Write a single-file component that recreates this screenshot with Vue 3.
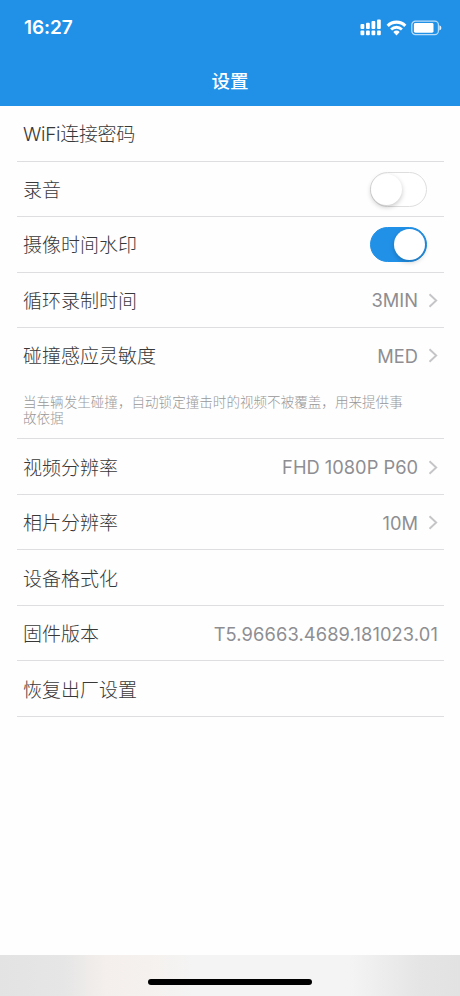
<script setup>
import { ref } from 'vue'

const rows = ref([
  { label: 'WiFi连接密码', kind: 'latin' },
  { label: '录音', toggle: true, on: false },
  { label: '摄像时间水印', toggle: true, on: true },
  { label: '循环录制时间', value: '3MIN', arrow: true },
  {
    label: '碰撞感应灵敏度',
    value: 'MED',
    arrow: true,
    note: '当车辆发生碰撞，自动锁定撞击时的视频不被覆盖，用来提供事故依据',
  },
  { label: '视频分辨率', value: 'FHD 1080P P60', arrow: true },
  { label: '相片分辨率', value: '10M', arrow: true },
  { label: '设备格式化' },
  { label: '固件版本', value: 'T5.96663.4689.181023.01', kind: 'version' },
  { label: '恢复出厂设置' },
])
</script>

<template>
  <div class="screen">
    <header class="header">
      <div class="status">
        <span class="time">16:27</span>
        <div class="indicators">
          <svg class="signal" width="21" height="17" viewBox="0 0 21 17" fill="#fff">
            <rect x="0.5" y="5" width="3.8" height="5" rx="1" />
            <rect x="6" y="3.7" width="3.8" height="6.3" rx="1" />
            <rect x="11.5" y="2" width="3.8" height="8" rx="1" />
            <rect x="17" y="0.5" width="3.8" height="9.5" rx="1" />
            <rect x="0.5" y="11.5" width="3.8" height="4.8" rx="1" />
            <rect x="6" y="11.5" width="3.8" height="4.8" rx="1" />
            <rect x="11.5" y="11.5" width="3.8" height="4.8" rx="1" />
            <rect x="17" y="11.5" width="3.8" height="4.8" rx="1" />
          </svg>
          <svg class="wifi" width="21" height="16" viewBox="0 0 21 16">
            <path d="M1.7 5.8a12.6 12.6 0 0 1 17.6 0" fill="none" stroke="#fff" stroke-width="3.2" />
            <path d="M5.1 9.4a7.8 7.8 0 0 1 10.8 0" fill="none" stroke="#fff" stroke-width="2.8" />
            <path d="M7.3 12.1a4.7 4.7 0 0 1 6.4 0L10.5 15.4z" fill="#fff" />
          </svg>
          <svg class="battery" width="31" height="16" viewBox="0 0 31 16">
            <rect x="0.8" y="1.2" width="26.6" height="13.4" rx="3.6" fill="none" stroke="#b9dcf8" stroke-width="1.2" />
            <rect x="2.9" y="3.1" width="19.6" height="9.6" rx="1.4" fill="#fff" />
            <path d="M28.4 5.3q2 .8 2 2.6t-2 2.6z" fill="#e6f3fd" />
          </svg>
        </div>
      </div>
      <h1 class="title">设置</h1>
    </header>

    <main class="list">
      <section v-for="row in rows" :key="row.label" class="item">
        <div class="row">
          <span class="label" :class="row.kind">{{ row.label }}</span>
          <button
            v-if="row.toggle"
            class="switch"
            :class="{ on: row.on }"
            :aria-pressed="row.on"
            @click="row.on = !row.on"
          >
            <span class="knob"></span>
          </button>
          <span v-if="row.value" class="value" :class="row.kind">{{ row.value }}</span>
          <svg v-if="row.arrow" class="arrow" width="10" height="15" viewBox="0 0 10 15">
            <path d="M1.5 1.3 8.2 7.5 1.5 13.7" fill="none" stroke="#c5c5c8" stroke-width="1.9" />
          </svg>
        </div>
        <p v-if="row.note" class="note">{{ row.note }}</p>
      </section>
    </main>

    <footer class="footer"><span class="home"></span></footer>
  </div>
</template>

<style>
body {
  margin: 0;
  background: #fefefe;
}
</style>

<style scoped>
.screen {
  display: flex;
  flex-direction: column;
  width: 460px;
  height: 996px;
  overflow: hidden;
  background: #fefefe;
  font-family: Inter, "Noto Sans CJK SC", sans-serif;
}
.header {
  flex: none;
  height: 106px;
  background: #2191e8;
  color: #fff;
}
.status {
  display: flex;
  justify-content: space-between;
  align-items: center;
  height: 55px;
  padding: 0 18px 0 24px;
}
.time {
  font-size: 19px;
  font-weight: 600;
  letter-spacing: -0.1px;
}
.indicators {
  display: flex;
  align-items: center;
  gap: 5px;
}
.battery {
  margin-left: -1px;
}
.title {
  margin: 0;
  font-size: 18.5px;
  font-weight: 500;
  line-height: 53px;
  text-align: center;
}
.list {
  flex: 1;
  padding: 0 16px 0 17px;
}
.item {
  box-sizing: border-box;
  border-bottom: 1px solid #dedee0;
}
.row {
  display: flex;
  align-items: center;
  box-sizing: border-box;
  height: 54.55px;
  padding: 1px 6px 0;
}
.label {
  flex: 1;
  padding-top: 3px;
  color: #383838;
  font-size: 19px;
  font-weight: 300;
  line-height: 28px;
}
.label.latin {
  letter-spacing: -0.3px;
}
.value {
  color: #8e8e92;
  font-size: 18.3px;
  font-weight: 400;
}
.value.version {
  letter-spacing: 0.12px;
}
.arrow {
  flex: none;
  margin-left: 10px;
}
.switch {
  box-sizing: border-box;
  width: 57px;
  height: 35px;
  margin-right: 11px;
  padding: 0;
  border: 1.5px solid #dedede;
  border-radius: 18px;
  background: #fff;
  display: flex;
  align-items: center;
}
.switch.on {
  justify-content: flex-end;
  padding-right: 1px;
  border-color: #2191e8;
  background: #2191e8;
}
.knob {
  width: 31px;
  height: 31px;
  border-radius: 50%;
  background: #fff;
  box-shadow: 0 2px 5px rgba(0, 0, 0, 0.22);
}
.note {
  box-sizing: border-box;
  height: 55.55px;
  margin: 0;
  padding: 11px 32px 0 6px;
  color: #989898;
  font-size: 13.57px;
  font-weight: 300;
  line-height: 16px;
}
.footer {
  flex: none;
  display: flex;
  justify-content: center;
  box-sizing: border-box;
  height: 41px;
  padding-top: 24px;
  background: linear-gradient(90deg, #e3e3e3 0%, #e6e6e6 14%, #f4efec 23%, #f5f1ee 32%, #f4f4f4 42%, #f4f4f4 76%, #e5e5e5 91%, #e2e2e2 100%);
}
.home {
  width: 164px;
  height: 6px;
  border-radius: 3px;
  background: #000;
}
</style>
